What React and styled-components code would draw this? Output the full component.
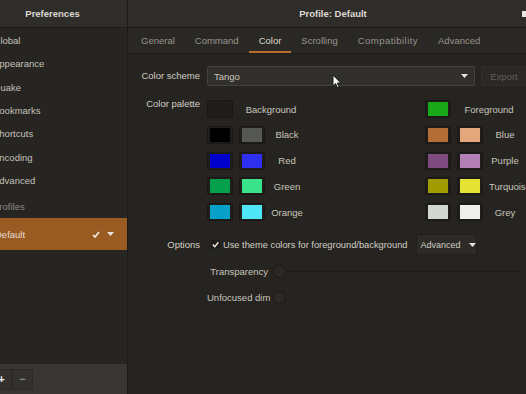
import React from 'react';
import styled, { createGlobalStyle } from 'styled-components';

const GlobalStyle = createGlobalStyle`
  html, body {
    margin: 0;
    padding: 0;
    background: #262420;
    overflow: hidden;
  }
  body {
    font-family: "Liberation Sans", Arial, sans-serif;
    font-size: 9.5px;
    color: #cfcbc3;
  }
  * { box-sizing: border-box; }
`;

const Window = styled.div`
  position: relative;
  display: flex;
  width: 560px;
  height: 394px;
  margin-left: -22px;
`;

const Sidebar = styled.div`
  width: 150px;
  display: flex;
  flex-direction: column;
  background: #272522;
  border-right: 1px solid #1c1b18;
`;

const HeaderBar = styled.div`
  height: 28px;
  flex-shrink: 0;
  background: #2f2d29;
  border-bottom: 1px solid #1d1c19;
  display: grid;
  grid-template-columns: 1fr auto 1fr;
  align-items: center;
  color: #dedad2;
  font-weight: bold;
`;

const Title = styled.div`
  grid-column: 2;
`;

const HeaderMark = styled.div`
  grid-column: 3;
  justify-self: end;
  margin-right: 10px;
  width: 6px;
  height: 6px;
  background: #e8e6e2;
`;

const NavList = styled.div`
  flex: 1;
  padding-top: 1px;
`;

const NavItem = styled.div`
  height: 23.3px;
  display: flex;
  align-items: center;
  padding-left: 15px;
  color: #c4c1ba;
`;

const SectionLabel = styled(NavItem)`
  height: 26px;
  padding-top: 3px;
  color: #8d8982;
`;

const ProfileRow = styled.div`
  height: 32px;
  display: flex;
  align-items: center;
  gap: 7px;
  padding: 0 13px 0 17px;
  background: #9a5b22;
  color: #e6ddd2;
`;

const ProfileName = styled.span`
  flex: 1;
`;

const Footer = styled.div`
  height: 30px;
  display: flex;
  align-items: center;
  padding-left: 13px;
  background: #383632;
`;

const FooterButton = styled.div`
  width: 21px;
  height: 21px;
  display: flex;
  align-items: center;
  justify-content: center;
  background: #33312d;
  border: 1px solid #2c2a27;
  color: ${p => (p.dim ? '#8a8781' : '#f2f0ec')};
  font-size: 11px;
  font-weight: bold;
`;

const Main = styled.div`
  flex: 1;
  display: flex;
  flex-direction: column;
  background: #262420;
`;

const TabBar = styled.div`
  height: 26px;
  display: flex;
  padding-left: 3px;
  background: #2a2825;
  border-bottom: 1px solid #211f1c;
`;

const Tab = styled.div`
  padding: 2px 10px 0;
  display: flex;
  align-items: center;
  color: ${p => (p.active ? '#dedad2' : '#98948c')};
  border-bottom: 2px solid ${p => (p.active ? '#b96e2d' : 'transparent')};
  letter-spacing: ${p => (p.wide ? '0.45px' : '0')};
`;

const Content = styled.div`
  padding: 12px 11px 0 12px;
`;

const FormRow = styled.div`
  display: grid;
  grid-template-columns: 60px 1fr;
  column-gap: 7px;
  align-items: ${p => p.align || 'center'};
  margin-top: ${p => p.gap || 0}px;
`;

const Label = styled.div`
  text-align: right;
  white-space: nowrap;
  color: #d2cec6;
  line-height: 12px;
  margin-top: ${p => p.shift || 0}px;
`;

const SchemeControls = styled.div`
  display: flex;
  gap: 6px;
`;

const Select = styled.div`
  flex: 1;
  height: 20px;
  display: flex;
  align-items: center;
  justify-content: space-between;
  padding: 0 6px;
  background: #312f2b;
  border: 1px solid #45423d;
  border-radius: 2px;
  color: #c9c5bd;
`;

const GhostButton = styled.div`
  width: 46px;
  height: 20px;
  display: flex;
  align-items: center;
  justify-content: center;
  background: #2b2926;
  border: 1px solid #34312d;
  border-radius: 2px;
  color: #615d57;
`;

const Palette = styled.div`
  display: flex;
  gap: 122px;
`;

const SwatchGroup = styled.div`
  display: grid;
  grid-template-columns: 26px 26px 32px;
  column-gap: 6px;
  row-gap: 7.75px;
  align-items: center;
`;

const Swatch = styled.div`
  width: 26px;
  height: 18px;
  padding: 1px 2px;
  background: #1f1e1b;
  border: 1px solid #191816;
  border-radius: 2px;
  grid-column: ${p => p.col};
`;

const Fill = styled.div`
  width: 100%;
  height: 100%;
  background: ${p => p.color};
`;

const SwatchLabel = styled.div`
  text-align: center;
  white-space: nowrap;
  color: #c8c4bc;
  grid-column: ${p => (p.wide ? '2 / 4' : '3')};
`;

const OptionsBody = styled.div`
  display: flex;
  flex-direction: column;
`;

const CheckRow = styled.div`
  height: 21px;
  display: flex;
  align-items: center;
  padding-left: 4px;
  color: #d2cec6;
`;

const CheckText = styled.span`
  margin-left: 3px;
  margin-right: 8px;
  font-size: 9.3px;
`;

const DropButton = styled.div`
  width: 61px;
  height: 21px;
  display: flex;
  align-items: center;
  gap: 8px;
  padding: 0 0 0 4px;
  background: #2d2b28;
  border: 1px solid #211f1c;
  border-radius: 2px;
  color: #cfcbc3;
  font-size: 9px;
`;

const SliderRows = styled.div`
  margin-top: 3px;
`;

const SliderRow = styled.div`
  height: 26px;
  display: grid;
  grid-template-columns: 61px 13px 1fr;
  column-gap: 5px;
  align-items: center;
`;

const SliderLabel = styled.div`
  text-align: right;
  white-space: nowrap;
  color: #c8c4bc;
`;

const Knob = styled.div`
  width: 13px;
  height: 13px;
  border-radius: 50%;
  background: #2b2926;
  border: 1px solid #1b1a18;
`;

const Track = styled.div`
  height: 1px;
  margin-left: -5px;
  margin-right: 7px;
  background: ${p => (p.faint ? '#242320' : '#1e1d1a')};
`;

const Cursor = styled.svg`
  position: absolute;
  left: 354px;
  top: 74px;
`;

const Caret = ({ color = '#e6e3de' }) => (
  <svg width="7" height="4" viewBox="0 0 7 4">
    <path d="M0 0 L7 0 L3.5 4 Z" fill={color} />
  </svg>
);

const Check = () => (
  <svg width="8" height="7" viewBox="0 0 8 7">
    <path d="M1 4 L3 6 L7 1" stroke="#f0ebe4" strokeWidth="1.6" fill="none" />
  </svg>
);

const CheckBox = () => (
  <svg width="9" height="9" viewBox="0 0 9 9">
    <rect x="0" y="0" width="9" height="9" rx="1" fill="#1d1c19" />
    <path d="M1.8 4.6 L3.8 6.6 L7.4 2.2" stroke="#e8e4de" strokeWidth="1.5" fill="none" />
  </svg>
);

const navItems = ['Global', 'Appearance', 'Quake', 'Bookmarks', 'Shortcuts', 'Encoding', 'Advanced'];
const tabs = ['General', 'Command', 'Color', 'Scrolling', 'Compatibility', 'Advanced'];

const leftPalette = [
  ['Black', '#000000', '#555753'],
  ['Red', '#0000cc', '#2f2ff0'],
  ['Green', '#05a04e', '#3ae28a'],
  ['Orange', '#06a0c8', '#4fe6f8'],
];

const rightPalette = [
  ['Blue', '#b56d36', '#e2a87c'],
  ['Purple', '#7d4b7d', '#b47fb4'],
  ['Turquoise', '#a19d00', '#e5e233'],
  ['Grey', '#d3d7d3', '#eeeeec'],
];

const Group = ({ first, firstColor, rows }) => (
  <SwatchGroup>
    <Swatch col={1}><Fill color={firstColor} /></Swatch>
    <SwatchLabel wide>{first}</SwatchLabel>
    {rows.map(([name, a, b]) => (
      <React.Fragment key={name}>
        <Swatch col={1}><Fill color={a} /></Swatch>
        <Swatch col={2}><Fill color={b} /></Swatch>
        <SwatchLabel>{name}</SwatchLabel>
      </React.Fragment>
    ))}
  </SwatchGroup>
);

export default function App() {
  return (
    <>
      <GlobalStyle />
      <Window>
        <Sidebar>
          <HeaderBar>
            <Title>Preferences</Title>
          </HeaderBar>
          <NavList>
            {navItems.map(item => <NavItem key={item}>{item}</NavItem>)}
            <SectionLabel>Profiles</SectionLabel>
            <ProfileRow>
              <ProfileName>Default</ProfileName>
              <Check />
              <Caret />
            </ProfileRow>
          </NavList>
          <Footer>
            <FooterButton>+</FooterButton>
            <FooterButton dim>−</FooterButton>
          </Footer>
        </Sidebar>
        <Main>
          <HeaderBar>
            <Title>Profile: Default</Title>
            <HeaderMark />
          </HeaderBar>
          <TabBar>
            {tabs.map(t => (
              <Tab key={t} active={t === 'Color'} wide={t === 'Compatibility'}>{t}</Tab>
            ))}
          </TabBar>
          <Content>
            <FormRow>
              <Label>Color scheme</Label>
              <SchemeControls>
                <Select>
                  <span>Tango</span>
                  <Caret />
                </Select>
                <GhostButton>Export</GhostButton>
              </SchemeControls>
            </FormRow>
            <FormRow align="start" gap={14}>
              <Label shift={-2}>Color palette</Label>
              <Palette>
                <Group first="Background" firstColor="#1e1d1b" rows={leftPalette} />
                <Group first="Foreground" firstColor="#18a818" rows={rightPalette} />
              </Palette>
            </FormRow>
            <FormRow align="start" gap={13}>
              <Label shift={5}>Options</Label>
              <OptionsBody>
                <CheckRow>
                  <CheckBox />
                  <CheckText>Use theme colors for foreground/background</CheckText>
                  <DropButton>
                    <span>Advanced</span>
                    <Caret />
                  </DropButton>
                </CheckRow>
                <SliderRows>
                  <SliderRow>
                    <SliderLabel>Transparency</SliderLabel>
                    <Knob />
                    <Track />
                  </SliderRow>
                  <SliderRow>
                    <SliderLabel>Unfocused dim</SliderLabel>
                    <Knob />
                    <Track faint />
                  </SliderRow>
                </SliderRows>
              </OptionsBody>
            </FormRow>
          </Content>
        </Main>
        <Cursor width="10" height="15" viewBox="0 0 10 15">
          <path d="M1 1 L1 12 L3.6 9.6 L5.6 14 L7.2 13.3 L5.3 9 L8.8 9 Z" fill="#f4f4f4" stroke="#111" strokeWidth="0.9" />
        </Cursor>
      </Window>
    </>
  );
}
